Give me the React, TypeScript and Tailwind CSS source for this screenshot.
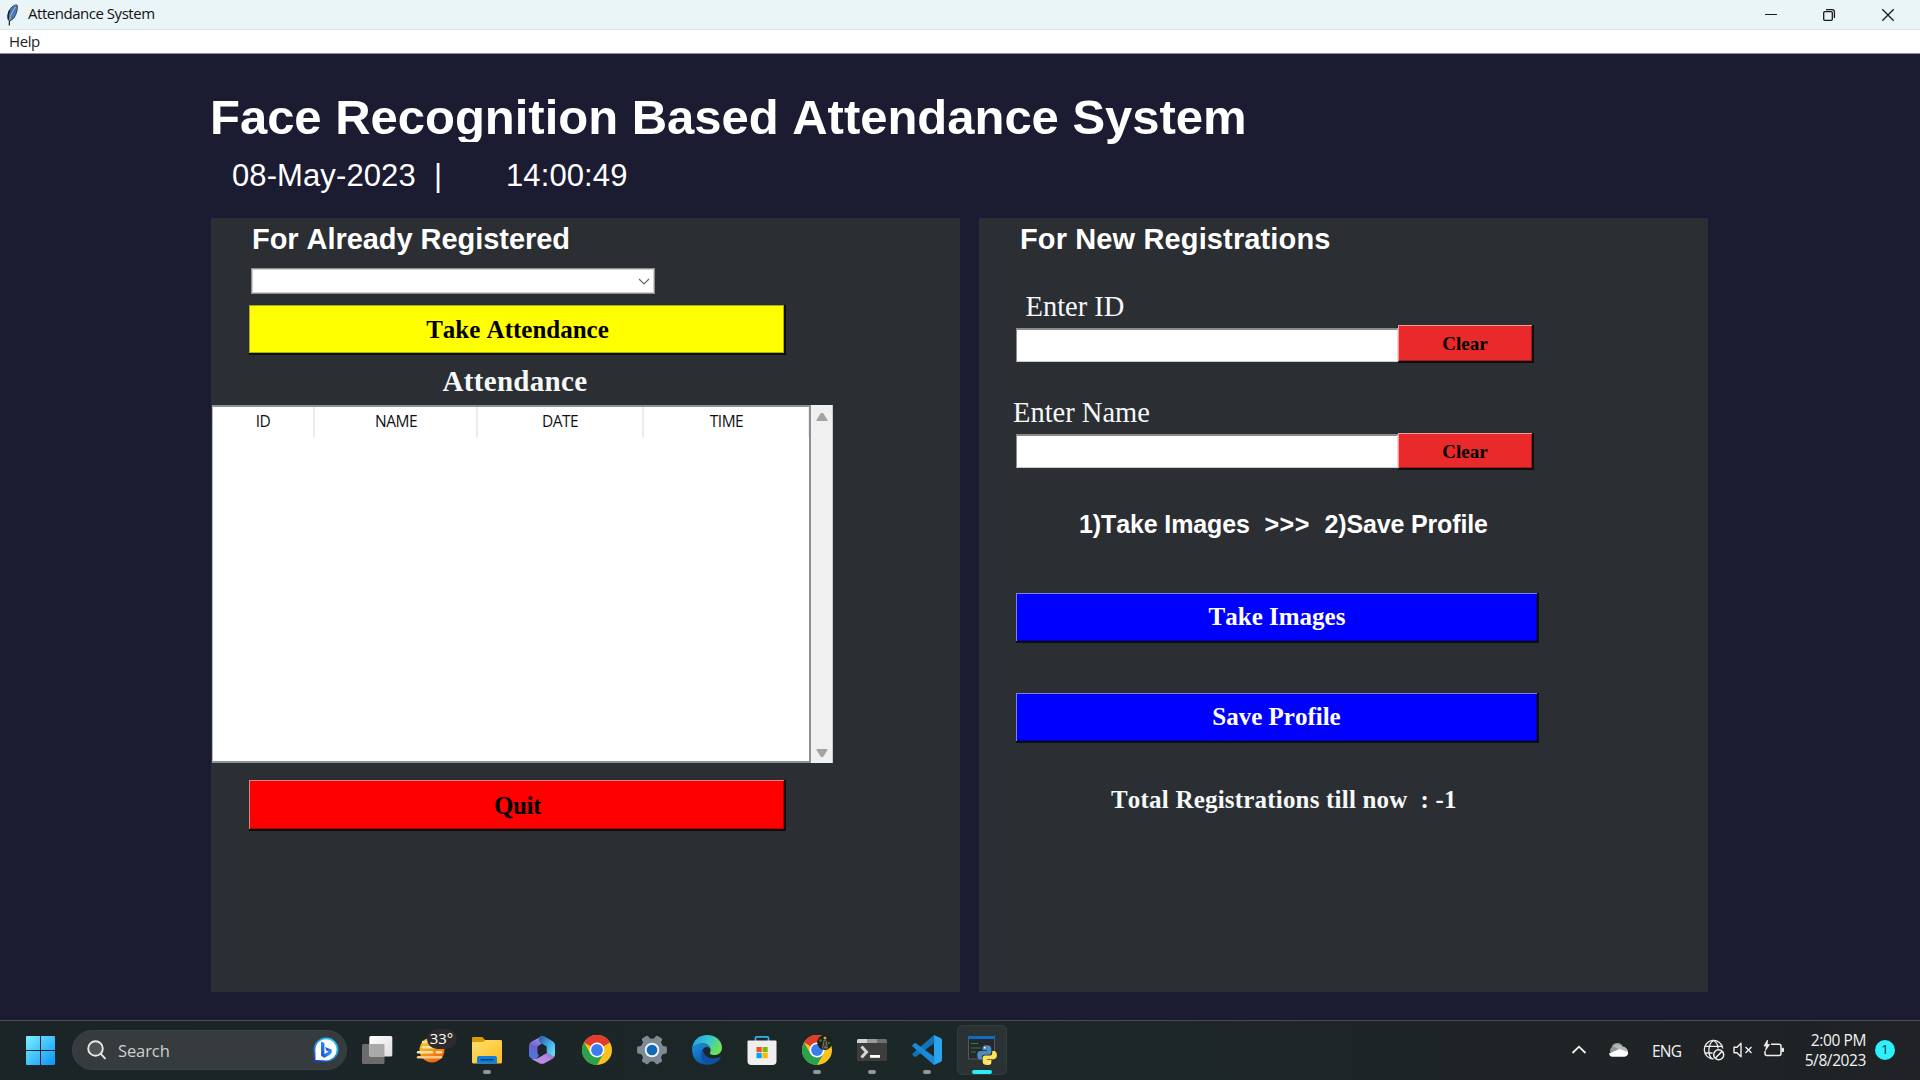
import React from "react";

const UI = "font-['Open_Sans','Noto_Sans',sans-serif]";
const SANS = "font-['Liberation_Sans',Arial,sans-serif]";
const SERIF = "font-['Liberation_Serif','Times_New_Roman',serif]";

function Feather() {
  return (
    <svg width="14" height="26" viewBox="0 0 14 26" className="ml-[5px] block">
      <path d="M4.3 23.5 C4 20 5.5 12 11 5" stroke="#2c2c2c" strokeWidth="1.3" fill="none" />
      <path d="M12 3 C13 5 12 11 9.5 15 C8.5 17 6.5 18.5 3.8 18.5 C2 14 3.5 8 7 5 C8.5 3.5 10.5 2.8 12 3Z" fill="#4a7ab5" stroke="#39424f" strokeWidth="1" />
      <path d="M10.8 4.5 C7.5 9 5.4 13 4.6 18" stroke="#9dbbe0" strokeWidth="1" fill="none" />
      <path d="M4.8 8 C3.2 11 2.8 14 3.4 17.5" stroke="#1e2733" strokeWidth="1.5" fill="none" />
    </svg>
  );
}

function TitleBar() {
  return (
    <header className="flex h-[29px] items-center bg-[#eaf5f8]">
      <Feather />
      <span className="ml-[9px] pb-[2px] text-[15px] leading-[27px] tracking-[-0.47px] text-[#111]">Attendance System</span>
      <svg width="163" height="28" viewBox="-13 0 163 28" fill="none" stroke="#1a1a1a" strokeWidth="1.3" className="ml-auto block">
        <path d="M-5 13.5 H7" strokeWidth="1" />
        <rect x="53.7" y="10.7" width="8.6" height="8.6" rx="1" />
        <path d="M56 8.7 H62 Q64.4 8.7 64.4 11 V17" />
        <path d="M112.3 8.3 L123.7 19.7 M123.7 8.3 L112.3 19.7" />
      </svg>
    </header>
  );
}

function Relief({ children, className }: { children: React.ReactNode; className: string }) {
  return (
    <button className={"block border-r-2 border-b-2 border-[#0d0d0d] text-center leading-[30px] font-bold " + SERIF + " " + className}>{children}</button>
  );
}

function Field({ gap, buttonHeight }: { gap: string; buttonHeight: string }) {
  return (
    <div className="ml-[37px] flex items-end">
      <div className={"h-[34px] w-[382px] border-t-2 border-l border-r border-b border-[#8b8b8b] border-r-[#ddd] border-b-[#ccc] bg-white " + gap} />
      <Relief className={"w-[136px] bg-[#ea292a] pt-[2px] text-[19px] text-black shadow-[inset_1px_1px_0_#f49a9a,inset_-1px_-1px_0_#a31c1d] " + buttonHeight}>Clear</Relief>
    </div>
  );
}

function LeftPanel() {
  return (
    <section className="h-[774px] w-[749px] bg-[#2b2e32]">
      <h2 className={"ml-[41px] h-[50px] text-[29px] leading-[43px] font-bold tracking-[-0.05px] text-white " + SANS}>For Already Registered</h2>
      <div className="ml-[40px] flex h-[26px] w-[404px] items-center justify-end border border-[#8f8f8f] bg-white pt-[1px] pr-[4px] shadow-[inset_0_0_0_1px_#d0d0d0]">
        <svg width="12" height="8" viewBox="0 0 12 8" fill="none" stroke="#666" strokeWidth="1.2"><path d="M1 1 L6 6 L11 1" /></svg>
      </div>
      <Relief className="mt-[11px] ml-[38px] h-[50px] w-[537px] bg-[#ffff00] pt-[2px] pl-[2px] text-[25px] text-black shadow-[inset_1px_1px_0_#a5a528,inset_-1px_-1px_0_#b0b000]">Take Attendance</Relief>
      <h3 className={"h-[50px] w-[608px] text-center text-[29px] leading-[52px] font-bold tracking-[0.3px] text-[#f5f9fa] " + SERIF}>Attendance</h3>
      <div className="flex h-[358px] w-[622px] pl-px">
        <div className="flex w-[599px] border-2 border-l border-[#8a9097] border-l-[#b4b8bd] bg-white">
          <div className="h-[30px] w-[102px] border-r-2 border-[#ececec] text-center text-[15.5px] leading-[28px] tracking-[-0.5px] text-[#111]">ID</div>
          <div className="h-[30px] w-[163px] border-r-2 border-[#ececec] pl-px text-center text-[15.5px] leading-[28px] tracking-[-0.5px] text-[#111]">NAME</div>
          <div className="h-[30px] w-[166px] border-r-2 border-[#ececec] text-center text-[15.5px] leading-[28px] tracking-[-0.5px] text-[#111]">DATE</div>
          <div className="h-[30px] flex-1 border-r border-[#ececec] pl-px text-center text-[15.5px] leading-[28px] tracking-[-0.5px] text-[#111]">TIME</div>
        </div>
        <div className="flex flex-1 flex-col items-center justify-between border-r border-[#c9c9c9] bg-[#f0f0f0] pt-[7px] pb-[5px] pl-px">
          <svg width="12" height="10" viewBox="0 0 12 10"><path d="M4.6 1.5 Q6 0 7.4 1.5 L11.5 8 V9 H.5 V8Z" fill="#a3a3a3" /></svg>
          <svg width="12" height="10" viewBox="0 0 12 10"><path d="M4.6 8.5 Q6 10 7.4 8.5 L11.5 2 V1 H.5 V2Z" fill="#a3a3a3" /></svg>
        </div>
      </div>
      <Relief className="mt-[17px] ml-[38px] h-[51px] w-[537px] bg-[#ff0000] pt-[2px] pl-[2px] text-[25px] tracking-[-0.4px] text-black shadow-[inset_1px_1px_0_#e08080,inset_-1px_-1px_0_#b00000]">Quit</Relief>
    </section>
  );
}

function RightPanel() {
  return (
    <section className="h-[774px] w-[729px] bg-[#2b2e32]">
      <h2 className={"ml-[41px] h-[61px] text-[29px] leading-[43px] font-bold tracking-[0.13px] text-white " + SANS}>For New Registrations</h2>
      <p className={"ml-[46.5px] h-[46px] text-[28.5px] leading-[56px] text-[#f5f9fa] " + SERIF}>Enter ID</p>
      <Field gap="mb-[1px]" buttonHeight="h-[38px]" />
      <p className={"ml-[34px] h-[70px] pt-[22px] text-[28.5px] leading-[56px] text-[#f5f9fa] " + SERIF}>Enter Name</p>
      <Field gap="mb-[2px]" buttonHeight="h-[37px]" />
      <p className={"ml-[100px] h-[123px] pt-[33px] text-[25px] leading-[42px] font-bold whitespace-pre text-white " + SANS}>
        <span className="tracking-[-0.12px]">1)Take Images</span>
        <span className="tracking-[0.45px]">{"  >>>  "}</span>
        <span className="tracking-[-0.15px]">2)Save Profile</span>
      </p>
      <Relief className="ml-[37px] h-[50px] w-[523px] bg-[#0000ff] pl-px text-[25px] text-white shadow-[inset_1px_1px_0_#7f7fe0,inset_-1px_-1px_0_#0000b0]">Take Images</Relief>
      <Relief className="mt-[50px] ml-[37px] h-[50px] w-[523px] bg-[#0000ff] text-[25px] text-white shadow-[inset_1px_1px_0_#7f7fe0,inset_-1px_-1px_0_#0000b0]">Save Profile</Relief>
      <p className={"mt-[32px] ml-[132px] text-[25px] leading-[50px] font-bold tracking-[0.2px] whitespace-pre text-[#f5f9fa] " + SERIF}>{"Total Registrations till now  : -1"}</p>
    </section>
  );
}

function WindowsLogo() {
  return (
    <svg width="29" height="29" viewBox="0 0 29 29" className="ml-[26px] block">
      <defs><linearGradient id="win" gradientUnits="userSpaceOnUse" x1="0" y1="0" x2="29" y2="29"><stop offset="0" stopColor="#7cf0ff" /><stop offset="1" stopColor="#0a94f8" /></linearGradient></defs>
      <path d="M1 0H14V14H0V1Q0 0 1 0Z M15 0H28Q29 0 29 1V14H15Z M0 15H14V29H1Q0 29 0 28Z M15 15H29V28Q29 29 28 29H15Z" fill="url(#win)" />
    </svg>
  );
}

function BingLogo() {
  return (
    <svg width="26" height="26" viewBox="0 0 26 26" className="ml-auto mr-[7px] block">
      <defs>
        <linearGradient id="bingRing" x1="0.8" y1="0" x2="0.2" y2="1"><stop offset="0" stopColor="#25cdf0" /><stop offset="0.5" stopColor="#2196e8" /><stop offset="1" stopColor="#1741b8" /></linearGradient>
        <linearGradient id="bingB" x1="0" y1="0" x2="1" y2="1"><stop offset="0" stopColor="#2f8cf0" /><stop offset="0.5" stopColor="#1f5bd8" /><stop offset="1" stopColor="#39c7ef" /></linearGradient>
      </defs>
      <path d="M.5 25 V13 A12.5 12.3 0 1 1 13 25Z" fill="url(#bingRing)" />
      <circle cx="13" cy="12.8" r="10.6" fill="#fff" />
      <path d="M2.5 13 V23 L12 23.3Z" fill="#fff" />
      <path d="M8 4.5 L11.4 6 V17 L15.5 14.7 L13.2 13.5 L12 10 L18.5 12.6 Q20 16 16.5 18 L11.4 21 L8 18.8Z" fill="url(#bingB)" />
    </svg>
  );
}

function TaskView() {
  return (
    <svg width="34" height="30" viewBox="0 0 34 30">
      <defs><linearGradient id="tv" x1="0" y1="0" x2="1" y2="1"><stop offset="0" stopColor="#fff" /><stop offset="1" stopColor="#dedede" /></linearGradient></defs>
      <rect x="2" y="9" width="22.5" height="20" rx="1.5" fill="#6c6c6c" />
      <rect x="9.3" y="1" width="23" height="20.5" rx="1.5" fill="url(#tv)" />
      <path d="M9.3 9 H23.5 Q24.5 9 24.5 10 V21.5 H10.5 Q9.3 21.5 9.3 20.5Z" fill="#a9a9a9" />
    </svg>
  );
}

function Weather() {
  return (
    <div className="relative ml-[10px] h-[40px] w-[44px] shrink-0">
      <svg width="44" height="40" viewBox="0 0 44 40">
        <defs><linearGradient id="sun" x1="0" y1="0" x2="0.6" y2="1"><stop offset="0" stopColor="#ffd61f" /><stop offset="0.5" stopColor="#fb9f1c" /><stop offset="1" stopColor="#ee620c" /></linearGradient></defs>
        <circle cx="17" cy="20" r="12.5" fill="url(#sun)" />
        <g stroke="#fbe3a4" strokeWidth="2.4" strokeLinecap="round">
          <path d="M8 12H15" /><path d="M8 17.3H20" /><path d="M3 22.3H17" /><path d="M22 22.3H26" /><path d="M3 27.3H26" stroke="#fac98a" />
        </g>
      </svg>
      <span className="absolute top-[-1px] left-[12px] h-[20px] w-[30px] rounded-full bg-[#2d2b2b] text-center text-[15px] leading-[19px] tracking-[0px] text-white">33°</span>
    </div>
  );
}

function Folder() {
  return (
    <svg width="30" height="30" viewBox="0 0 30 30">
      <defs><linearGradient id="fold" x1="0" y1="0" x2="1" y2="1"><stop offset="0" stopColor="#ffe070" /><stop offset="1" stopColor="#ffbc1e" /></linearGradient></defs>
      <path d="M0 3 Q0 2 1.2 2 H9.5 Q10.5 2 11.2 2.8 L13 5 H28 Q30 5 30 7 V12 H0Z" fill="#dc9a05" />
      <path d="M0 8 Q0 7 1.2 7 H11 L13.5 5 H28.5 Q30 5 30 6.5 V27 Q30 28.5 28.5 28.5 H1.5 Q0 28.5 0 27Z" fill="url(#fold)" />
      <path d="M5 28.5 V23 Q5 21 7 21 H23 Q25 21 25 23 V28.5Z" fill="#0f7fdb" />
      <rect x="8.5" y="24" width="13" height="1.4" rx=".7" fill="#083f78" />
    </svg>
  );
}

function M365() {
  return (
    <svg width="28" height="30" viewBox="0 0 28 30">
      <defs>
        <linearGradient id="ma" x1="0.6" y1="0" x2="0.3" y2="1"><stop offset="0" stopColor="#a99af5" /><stop offset="0.5" stopColor="#6a62cc" /><stop offset="1" stopColor="#4a7be0" /></linearGradient>
        <linearGradient id="mb" x1="0" y1="0" x2="1" y2="0.8"><stop offset="0" stopColor="#2458a0" /><stop offset="0.5" stopColor="#3f9fe0" /><stop offset="1" stopColor="#5fe0f5" /></linearGradient>
        <linearGradient id="mc" x1="0" y1="1" x2="1" y2="0"><stop offset="0" stopColor="#c48cf5" /><stop offset="0.5" stopColor="#b48ae0" /><stop offset="1" stopColor="#6d4ba3" /></linearGradient>
      </defs>
      <path d="M14 1 L3 7 Q1 8.5 1 11 V20 Q1 22 3 23.3 Q6 25 9 23 Q12 21 9.5 18 V11.5 L12.5 9.5 Q15 7.5 17 2Z" fill="url(#ma)" />
      <path d="M27 19 Q27 22 25 23.5 L16.5 28.3 Q14 29.3 11.5 28.3 L3.5 24 Q9 24.5 12.5 21.8 L18.7 18 L22 12Z" fill="url(#mc)" />
      <path d="M12 1.5 Q14 .5 16.500 1.5 L25 6.5 Q27 8 27 10 V19 Q27 21 25.5 21.5 L18.7 17 V11.5 L14.5 9 Q8.5 6 12 1.5Z" fill="url(#mb)" />
      <path d="M14 10.300 L18 12.700 V17.300 L14 19.700 L10 17.300 V12.700Z" fill="#1c2628" />
    </svg>
  );
}

function Chrome({ avatar }: { avatar?: boolean }) {
  return (
    <svg width="30" height="30" viewBox="0 0 30 30">
      <circle cx="15" cy="15" r="15" fill="#fcc31e" />
      <path d="M2 7.5 A15 15 0 0 1 28 7.5 L15 15Z" fill="#e33b2e" />
      <path d="M2 7.5 A15 15 0 0 0 15 30 L21.5 18.7 L8.5 18.7Z" fill="#2aa14b" />
      <circle cx="15" cy="15" r="7.5" fill="#fff" />
      <circle cx="15" cy="15" r="5.9" fill="#3b7cf0" />
      {avatar && (
        <g>
          <circle cx="22.7" cy="7.5" r="7.5" fill="#16260f" />
          <circle cx="18.5" cy="5.5" r="1.5" fill="#3c6b25" />
          <circle cx="27" cy="8" r="1.3" fill="#3c6b25" />
          <circle cx="23" cy="3" r="1.5" fill="#c99c80" />
          <path d="M20 13.5 L21.5 5 H24.5 L26 13.5Z" fill="#7b726b" />
          <path d="M22 6 L24.5 12 M24 5 L21.5 13" stroke="#2a2420" strokeWidth=".9" />
        </g>
      )}
    </svg>
  );
}

function Gear() {
  const teeth = [30, 90, 150, 210, 270, 330];
  return (
    <svg width="30" height="30" viewBox="0 0 30 30">
      <g fill="#7d8993">
        <circle cx="15" cy="15" r="11.5" />
        {teeth.map((a) => (
          <path key={a} d="M10.5 6 L11.5 .9 Q11.7 .2 12.5 .1 H17.5 Q18.3 .2 18.5 .9 L19.5 6Z" transform={`rotate(${a} 15 15)`} />
        ))}
      </g>
      <circle cx="15" cy="15" r="7.3" fill="#eef2f5" />
      <circle cx="15" cy="15" r="5.3" fill="#0f68b8" />
    </svg>
  );
}

function Edge() {
  return (
    <svg width="30" height="30" viewBox="0 0 30 30">
      <defs>
        <linearGradient id="ea" x1="0" y1="0" x2="1" y2="0.4"><stop offset="0" stopColor="#1e9be0" /><stop offset="0.55" stopColor="#35c5d5" /><stop offset="1" stopColor="#6ee05a" /></linearGradient>
        <linearGradient id="eb" x1="0" y1="0" x2="0.6" y2="1"><stop offset="0" stopColor="#1d90dd" /><stop offset="1" stopColor="#0c55a8" /></linearGradient>
      </defs>
      <path d="M0 14 C1 5 7 0 15 0 C24 0 30 6 30 12.5 C30 17.5 26.5 20 22.5 20 C18.5 20 17.3 18.6 18 17.5 C19.5 15.5 18.5 9.5 12 8.5 C6 8 1 11 0 14Z" fill="url(#ea)" />
      <path d="M0 14 C2 9.5 7 8 11 8.5 C16 9.2 18.5 12 18.7 14.5 C18 12.5 15.5 11.5 13 12.5 C9.5 14 9 19 12 23 C15 27 20 28.3 22.5 27.5 C16 32 0 30.5 0 14Z" fill="url(#eb)" />
      <path d="M11 15 C7 19 9.5 29 18 29.5 C23 29 27 26 28.6 23 C29 22 28 21.8 27.5 22 C20 25.5 12 22.5 11 15Z" fill="#124f9c" />
    </svg>
  );
}

function Store() {
  return (
    <svg width="30" height="30" viewBox="0 0 30 30">
      <path d="M8.5 7 V3 Q8.5 1.8 9.7 1.8 H20.3 Q21.5 1.8 21.5 3 V7" fill="none" stroke="#2cb4ec" strokeWidth="1.7" />
      <path d="M.5 6.5 Q.5 5.5 1.5 5.5 H28.5 Q29.5 5.5 29.5 6.5 V26 Q29.5 30 25.5 30 H4.5 Q.5 30 .5 26Z" fill="#efefef" />
      <rect x="9.5" y="12" width="5.2" height="5.2" fill="#ef5023" />
      <rect x="15.5" y="12" width="5.2" height="5.2" fill="#7fb900" />
      <rect x="9.5" y="18" width="5.2" height="5.2" fill="#02a3ee" />
      <rect x="15.5" y="18" width="5.2" height="5.2" fill="#feb800" />
    </svg>
  );
}

function Terminal() {
  return (
    <svg width="30" height="30" viewBox="0 0 30 30">
      <rect x="0" y="4" width="30" height="22" rx="1.5" fill="#3d3d3d" />
      <path d="M0 8 V5.5 Q0 4 1.5 4 H10 V8Z" fill="#d4d4d4" />
      <rect x="10" y="4" width="10" height="4" fill="#9a9a9a" />
      <path d="M20 4 H28.5 Q30 4 30 5.5 V8 H20Z" fill="#6f6f6f" />
      <path d="M4.5 11.5 L9.5 17 L4.5 22.5" fill="none" stroke="#d6d6d6" strokeWidth="3" />
      <rect x="13" y="20" width="10" height="2.8" fill="#fff" />
    </svg>
  );
}

function VSCode() {
  return (
    <svg width="30" height="30" viewBox="0 0 30 30">
      <path d="M22 0 L29 3.2 Q30 3.7 30 5 V25 Q30 26.3 29 26.8 L22 30Z" fill="#2ba4ee" />
      <path d="M22 0 L.6 18.5 Q0 19.2 .6 20 L2.4 21.7 Q3.1 22.2 3.9 21.7 L22.500 8Z" fill="#1272b8" />
      <path d="M22 30 L.6 11.5 Q0 10.8 .6 10 L2.4 8.3 Q3.1 7.8 3.9 8.3 L22.500 22Z" fill="#1a8ad6" />
    </svg>
  );
}

function PythonWindow() {
  return (
    <svg width="30" height="30" viewBox="0 0 30 30">
      <rect x="1.5" y="2" width="26" height="22" fill="#26282b" stroke="#55585b" strokeWidth="1" />
      <rect x="1" y="1" width="27" height="3" fill="#0f6cc0" />
      <path d="M4 8.5H11M4 13H14M4 17H9" stroke="#2f7d3a" strokeWidth="1.2" />
      <path d="M19.7 10.3 C15.5 10.3 15.5 12.2 15.5 13.6 V15.3 H20 V16 H13.5 C10.9 16 10.2 18 10.2 20.2 C10.2 22.6 11.3 24.4 13.2 24.4 H14.9 V22.2 C14.9 20.5 16.1 19.7 17.6 19.7 H22 C23.5 19.7 24.3 18.5 24.3 17.3 V13.5 C24.3 11.5 22.7 10.3 19.7 10.3Z" fill="#4b8bc0" />
      <path d="M20.2 30 C24.4 30 24.4 28.1 24.4 26.7 V25 H20 V24.3 H26.5 C29 24.3 29.9 22.4 29.9 20.1 C29.9 17.7 28.8 15.9 26.9 15.9 H25.2 V18 C25.2 19.8 24 20.6 22.5 20.6 H18 C16.5 20.6 15.7 21.8 15.7 23 V26.8 C15.7 28.9 17.3 30 20.2 30Z" fill="#ffe15a" />
      <circle cx="17.7" cy="12.7" r=".9" fill="#fff" />
      <circle cx="22.3" cy="27.6" r=".9" fill="#fff" />
    </svg>
  );
}

function TaskItem({ children, running }: { children: React.ReactNode; running?: boolean }) {
  return (
    <div className="relative flex h-[50px] w-[55px] items-center justify-center">
      {children}
      {running && <span className="absolute bottom-[1px] left-[24px] h-[4px] w-[8px] rounded-full bg-[#92989a]" />}
    </div>
  );
}

function Taskbar() {
  return (
    <footer className="flex h-[60px] items-center border-t border-[#474b4c] bg-gradient-to-r from-[#1b2426] via-[#1c2728] to-[#202225] pb-px">
      <WindowsLogo />
      <div className="ml-[17px] flex h-[40px] w-[275px] items-center rounded-full border border-[#3c4244] bg-[#363c3e]">
        <svg width="20" height="20" viewBox="0 0 20 20" fill="none" stroke="#e6e8e8" strokeWidth="1.9" strokeLinecap="round" className="ml-[14px]">
          <circle cx="8.5" cy="8.5" r="7.3" fill="#4e5456" /><path d="M13.8 13.8 L18 18.3" />
        </svg>
        <span className="ml-[11px] pt-px text-[16.5px] leading-[38px] tracking-[-0.1px] text-[#cdd0d0]">Search</span>
        <BingLogo />
      </div>
      <nav className="ml-[2px] flex items-center">
        <TaskItem><TaskView /></TaskItem>
        <TaskItem><Weather /></TaskItem>
        <TaskItem running><Folder /></TaskItem>
        <TaskItem><M365 /></TaskItem>
        <TaskItem><Chrome /></TaskItem>
        <TaskItem><Gear /></TaskItem>
        <TaskItem><Edge /></TaskItem>
        <TaskItem><Store /></TaskItem>
        <TaskItem running><Chrome avatar /></TaskItem>
        <TaskItem running><Terminal /></TaskItem>
        <TaskItem running><VSCode /></TaskItem>
        <div className="relative ml-[3px] flex h-[50px] w-[50px] items-center justify-center rounded-[5px] border border-[#323a3c] bg-[#2a3234]">
          <PythonWindow />
          <span className="absolute bottom-0 left-[14px] h-[4px] w-[20px] rounded-full bg-[#2cecfb]" />
        </div>
      </nav>
      <div className="ml-auto flex items-center pr-[25px] text-[#f2f4f4]">
        <svg width="16" height="10" viewBox="0 0 16 10" fill="none" stroke="#f2f4f4" strokeWidth="1.8"><path d="M1.5 8 L8 1.7 L14.5 8" /></svg>
        <svg width="20" height="14" viewBox="0 0 20 14" className="ml-[21px]">
          <path d="M4 11 A4 4 0 0 1 3.5 4.5 A6 6 0 0 1 15 4 Q19 5 20 9 L10 12Z" fill="#8f9596" />
          <path d="M5 3 A6 5 0 0 1 14.5 3.5 Q19.5 4 20 9 L10 6Z" fill="#b4b8b9" />
          <path d="M1 10.5 L11.5 6 L20 9 A4 4 0 0 1 16.5 13.8 H4 Q1.5 13.5 1 10.5Z" fill="#fff" />
        </svg>
        <span className="ml-[24px] w-[31px] pt-px text-[15.5px] leading-[20px] tracking-[-0.75px]">ENG</span>
        <svg width="22" height="22" viewBox="0 0 22 22" fill="none" stroke="#eef0f0" strokeWidth="1.3" className="ml-[20px]">
          <path d="M10.5 20 A9.3 9.3 0 1 1 19.8 9.5" /><path d="M8.5 19.5 C4.5 15 5 4.5 10.5 1.5 C14 3.5 15 7 15 9.5" /><path d="M2 7.3 H19 M2 14 H9.5" />
          <circle cx="15.7" cy="15.7" r="5" strokeWidth="1.5" /><path d="M12.4 19 L19 12.4" strokeWidth="1.5" />
        </svg>
        <svg width="20" height="16" viewBox="0 0 20 16" fill="none" stroke="#eef0f0" strokeWidth="1.4" className="ml-[8px]">
          <path d="M1 5.2 H4 L8 1.3 V14.7 L4 10.8 H1Z" strokeLinejoin="round" /><path d="M12.5 5 L18.5 11 M18.5 5 L12.5 11" />
        </svg>
        <svg width="22" height="20" viewBox="0 0 22 20" fill="none" stroke="#eef0f0" strokeWidth="1.5" className="mb-[2px] ml-[10px]">
          <path d="M8 5.2 H16 Q18 5.2 18 7.2 V14.5 Q18 16.5 16 16.5 H4 Q2 16.5 2 14.5 V12" /><path d="M19 9.3 H20.5 V12.5 H19Z" fill="#eef0f0" strokeWidth="1" />
          <path d="M4.5 1 L1 7 H3.5 L2.5 11.5 L6.5 5.5 H4.2Z" fill="#eef0f0" strokeWidth=".8" />
        </svg>
        <div className="ml-[15px] w-[66px] text-right text-[15.5px] leading-[20px] tracking-[-0.4px]">
          <div>2:00 PM</div>
          <div>5/8/2023</div>
        </div>
        <span className="ml-[9px] flex h-[20px] w-[20px] items-center justify-center rounded-full bg-[#2cf0fb] text-[13px] text-[#10282a]">1</span>
      </div>
    </footer>
  );
}

export default function App() {
  return (
    <div className={"flex h-[1080px] w-[1920px] flex-col overflow-hidden bg-[#1b1b32] [font-kerning:none] [font-variant-ligatures:none] " + UI}>
      <TitleBar />
      <div className="h-[25px] border-t border-b border-t-[#dfe6e8] border-b-[#8e8d98] bg-white pl-[9px] text-[15px] leading-[22px] tracking-[-0.4px] text-[#222]">Help</div>
      <main className="flex-1 pt-[33px] pl-[211px] text-white">
        <h1 className={"h-[55px] text-[49px] leading-[60px] font-bold whitespace-nowrap " + SANS}><span className="-ml-[1px] tracking-[-0.02px]">Face Recognition Based Attendance System</span></h1>
        <div className={"relative flex h-[76px] w-[460px] bg-[#1b1b32] pl-[21px] text-[31px] leading-[68px] " + SANS}>
          <span className="w-[202px] tracking-[0.1px]">08-May-2023</span>
          <span className="w-[72px]">|</span>
          <span className="tracking-[0.1px]">14:00:49</span>
        </div>
        <div className="flex gap-[19px]">
          <LeftPanel />
          <RightPanel />
        </div>
      </main>
      <Taskbar />
    </div>
  );
}
